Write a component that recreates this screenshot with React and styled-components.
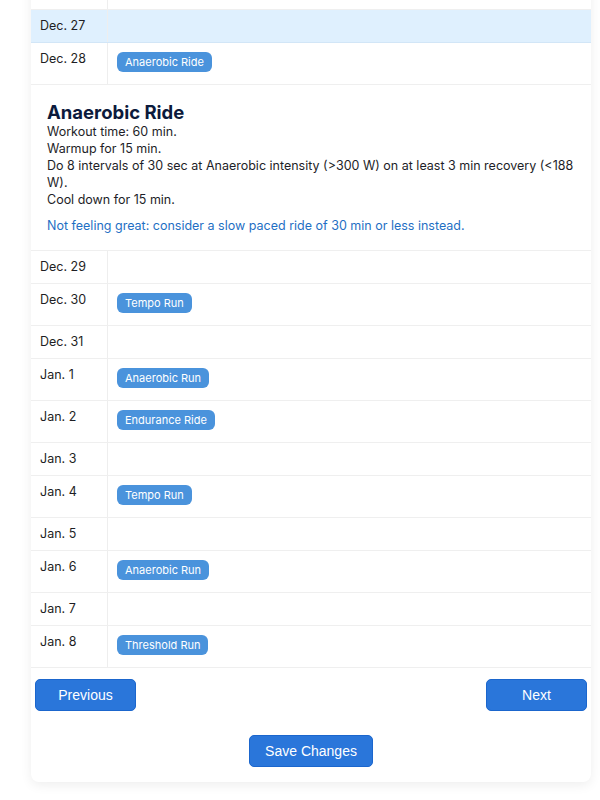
import React from 'react';
import styled, { createGlobalStyle } from 'styled-components';

// 페이지 기본 스타일
const GlobalStyle = createGlobalStyle`
  html, body {
    margin: 0;
    padding: 0;
    background: #ffffff;
    font-family: Inter, "Noto Sans", sans-serif;
  }
`;

// 일정 데이터 (scrolled view: first row only partly visible)
const days = [
  { date: 'Dec. 26' },
  { date: 'Dec. 27', today: true },
  { date: 'Dec. 28', workout: 'Anaerobic Ride', open: true },
  { date: 'Dec. 29' },
  { date: 'Dec. 30', workout: 'Tempo Run' },
  { date: 'Dec. 31' },
  { date: 'Jan. 1', workout: 'Anaerobic Run' },
  { date: 'Jan. 2', workout: 'Endurance Ride' },
  { date: 'Jan. 3' },
  { date: 'Jan. 4', workout: 'Tempo Run' },
  { date: 'Jan. 5' },
  { date: 'Jan. 6', workout: 'Anaerobic Run' },
  { date: 'Jan. 7' },
  { date: 'Jan. 8', workout: 'Threshold Run' },
];

const App = () => (
  <>
    <GlobalStyle />
    <Card>
      <Table>
        {days.map((day) => (
          <React.Fragment key={day.date}>
            <Row $today={day.today}>
              <DateCell>{day.date}</DateCell>
              <WorkoutCell>
                {day.workout && <Badge>{day.workout}</Badge>}
              </WorkoutCell>
            </Row>
            {day.open && (
              <Details>
                <Title>Anaerobic Ride</Title>
                <Line>Workout time: 60 min.</Line>
                <Line>Warmup for 15 min.</Line>
                <Line>
                  Do 8 intervals of 30 sec at Anaerobic intensity (&gt;300 W) on at least 3 min recovery (&lt;188 W).
                </Line>
                <Line>Cool down for 15 min.</Line>
                <Hint>Not feeling great: consider a slow paced ride of 30 min or less instead.</Hint>
              </Details>
            )}
          </React.Fragment>
        ))}
      </Table>
      <NavRow>
        <Button $wide>Previous</Button>
        <Button $wide>Next</Button>
      </NavRow>
      <SaveRow>
        <Button>Save Changes</Button>
      </SaveRow>
    </Card>
  </>
);

// 카드 컨테이너
const Card = styled.div`
  margin: -23px 9px 20px 31px;
  background: #ffffff;
  border-radius: 8px;
  box-shadow: 0 3px 12px rgba(0, 0, 0, 0.07);
  padding-bottom: 15px;
`;

const Table = styled.div`
  display: flex;
  flex-direction: column;
`;

const Row = styled.div`
  display: grid;
  grid-template-columns: 77px 1fr;
  border-bottom: 1px solid ${(p) => (p.$today ? '#d2e6f7' : '#efefef')};
  background: ${(p) => (p.$today ? '#dff0fe' : '#ffffff')};
  font-size: 12.5px;
  line-height: 16px;
  color: #1e1e24;
`;

const DateCell = styled.div`
  padding: 8px 9px;
  border-right: 1px solid #eeeeee;
`;

const WorkoutCell = styled.div`
  padding: 8px 9px;
`;

const Badge = styled.span`
  display: inline-block;
  height: 20px;
  line-height: 20px;
  margin: 1px 0 4px;
  padding: 0 8px;
  border-radius: 6px;
  background: #4a93dc;
  color: #ffffff;
  font-size: 11px;
`;

// 운동 상세 설명
const Details = styled.div`
  padding: 16px;
  border-bottom: 1px solid #efefef;
  font-size: 12.5px;
  line-height: 17px;
  color: #1e1e28;
`;

const Title = styled.h2`
  margin: 0;
  font-size: 18.5px;
  line-height: 22px;
  font-weight: 700;
  color: #0c1a3c;
`;

const Line = styled.div``;

const Hint = styled.div`
  margin-top: 9px;
  color: #1f6fc4;
`;

const NavRow = styled.div`
  display: flex;
  justify-content: space-between;
  padding: 11px 4px 0;
`;

const SaveRow = styled.div`
  display: flex;
  justify-content: center;
  padding-top: 24px;
`;

const Button = styled.button`
  height: 32px;
  min-width: ${(p) => (p.$wide ? '101px' : '0')};
  padding: 0 15px;
  border: 1px solid #1b66cd;
  border-radius: 5px;
  background: #2a76da;
  color: #ffffff;
  font-family: "Liberation Sans", Arial, sans-serif;
  font-size: 14px;
  cursor: pointer;
`;

export default App;
